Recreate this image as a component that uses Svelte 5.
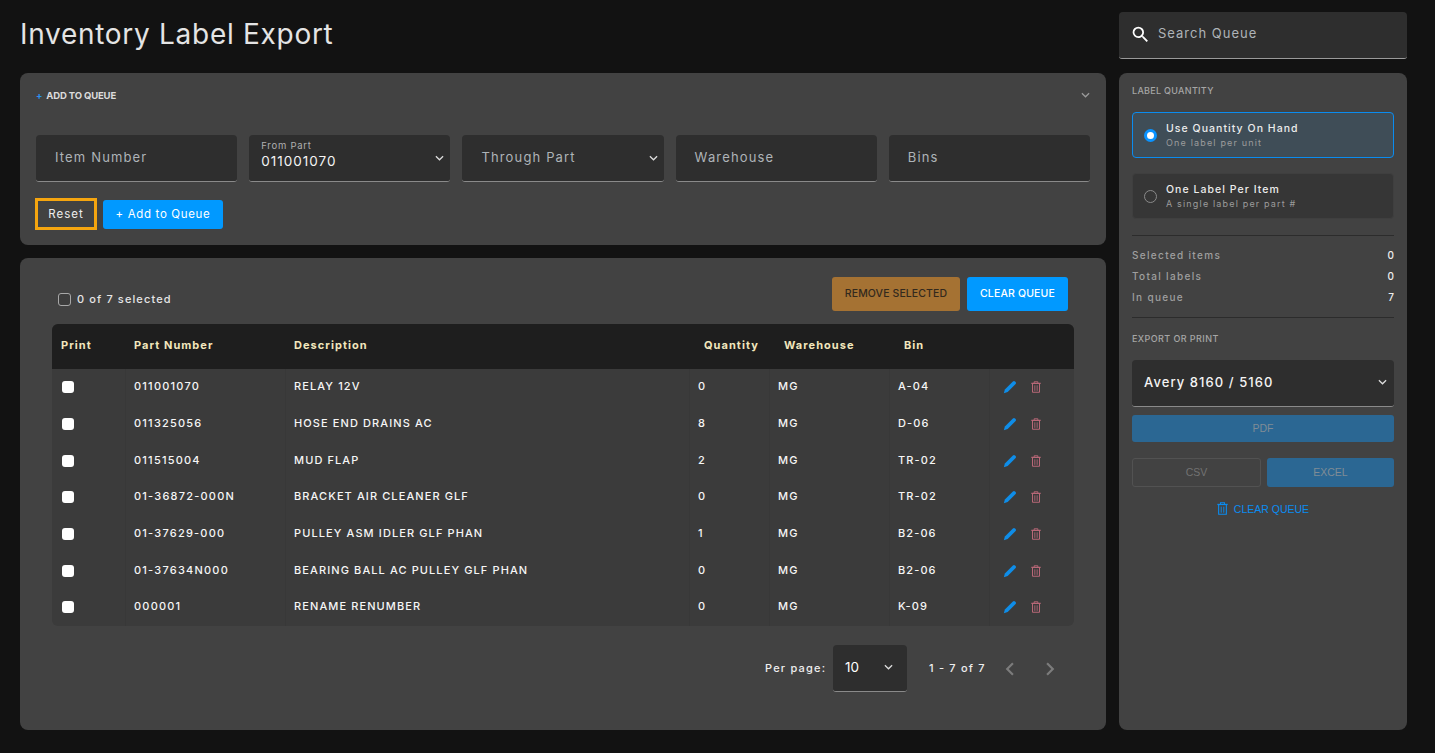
<script>
  const rows = [
    ['011001070','RELAY 12V','0','MG','A-04'],
    ['011325056','HOSE END DRAINS AC','8','MG','D-06'],
    ['011515004','MUD FLAP','2','MG','TR-02'],
    ['01-36872-000N','BRACKET AIR CLEANER GLF','0','MG','TR-02'],
    ['01-37629-000','PULLEY ASM IDLER GLF PHAN','1','MG','B2-06'],
    ['01-37634N000','BEARING BALL AC PULLEY GLF PHAN','0','MG','B2-06'],
    ['000001','RENAME RENUMBER','0','MG','K-09']
  ];
  const magnify = 'M9.5,3A6.5,6.5 0 0,1 16,9.5C16,11.11 15.41,12.59 14.44,13.73L14.71,14H15.5L20.5,19L19,20.5L14,15.5V14.71L13.73,14.44C12.59,15.41 11.11,16 9.5,16A6.5,6.5 0 0,1 3,9.5A6.5,6.5 0 0,1 9.5,3M9.5,5C7,5 5,7 5,9.5C5,12 7,14 9.5,14C12,14 14,12 14,9.5C14,7 12,5 9.5,5Z';
</script>

{#snippet chev(cls)}
  <svg class="chev {cls}" viewBox="0 0 10 6"><path d="M1 1l4 4 4-4" fill="none" stroke="currentColor" stroke-width="1.4"/></svg>
{/snippet}

{#snippet bin(cls)}
  <svg class={cls} viewBox="0 0 12 14" fill="none" stroke="currentColor">
    <path d="M0.4 2.6H11.6" stroke-width="1.4"/>
    <path d="M3.8 2.6V0.7H8.2V2.6" stroke-width="1.1"/>
    <path d="M1.8 3V13.3H10.2V3" stroke-width="1.2"/>
    <path d="M4.6 5V11.6M7.4 5V11.6" stroke-width="1"/>
  </svg>
{/snippet}

<div class="page">
  <main class="left">
    <h1>Inventory Label Export</h1>

    <section class="card filters">
      <div class="panel-head">
        <span class="panel-title"><b>+</b>ADD TO QUEUE</span>
        {@render chev('head-chev')}
      </div>
      <div class="fields">
        <div class="field"><span class="ph">Item Number</span></div>
        <div class="field filled">
          <span class="mini">From Part</span>
          <span class="val">011001070</span>
          {@render chev('field-chev')}
        </div>
        <div class="field"><span class="ph">Through Part</span>{@render chev('field-chev')}</div>
        <div class="field"><span class="ph">Warehouse</span></div>
        <div class="field"><span class="ph">Bins</span></div>
      </div>
      <div class="actions">
        <button class="reset">Reset</button>
        <button class="add">+ Add to Queue</button>
      </div>
    </section>

    <section class="card queue">
      <div class="toolbar">
        <label class="sel"><span class="box"></span>0 of 7 selected</label>
        <div class="tool-btns">
          <button class="remove">REMOVE SELECTED</button>
          <button class="clear">CLEAR QUEUE</button>
        </div>
      </div>
      <table>
        <colgroup>
          <col style="width:73px"/><col style="width:160px"/><col style="width:404px"/><col style="width:80px"/><col style="width:120px"/><col style="width:100px"/><col/>
        </colgroup>
        <thead>
          <tr>
            <th>Print</th><th>Part Number</th><th>Description</th>
            <th class="in">Quantity</th><th class="in">Warehouse</th><th class="in">Bin</th><th></th>
          </tr>
        </thead>
        <tbody>
          {#each rows as r}
            <tr>
              <td><span class="check"></span></td>
              <td class="part">{r[0]}</td>
              {#each r.slice(1) as c}<td>{c}</td>{/each}
              <td class="ops">
                <div class="op-row">
                  <svg class="pen" viewBox="0 0 14 14"><path d="M0.8 13.2L1.9 9.4L9.9 1.4Q11 .5 12 1.4L12.6 2Q13.5 3 12.6 4.1L4.6 12.1Z" fill="#0f8de8"/></svg>
                  {@render bin('row-bin')}
                </div>
              </td>
            </tr>
          {/each}
        </tbody>
      </table>
      <div class="pager">
        <span class="pp">Per page:</span>
        <div class="pp-select"><span>10</span>{@render chev('pp-chev')}</div>
        <span class="range">1 - 7 of 7</span>
        <svg class="nav" viewBox="0 0 24 24"><path d="M15.41,16.58L10.83,12L15.41,7.41L14,6L8,12L14,18L15.41,16.58Z" fill="#7c7c7c"/></svg>
        <svg class="nav" viewBox="0 0 24 24"><path d="M8.59,16.58L13.17,12L8.59,7.41L10,6L16,12L10,18L8.59,16.58Z" fill="#7c7c7c"/></svg>
      </div>
    </section>
  </main>

  <aside class="right">
    <div class="search">
      <svg viewBox="0 0 24 24"><path d={magnify} fill="#fff"/></svg>
      <span>Search Queue</span>
    </div>
    <section class="card side">
      <div class="cap">LABEL QUANTITY</div>
      <div class="opt on">
        <span class="radio"></span>
        <div><div class="opt-t">Use Quantity On Hand</div><div class="opt-s">One label per unit</div></div>
      </div>
      <div class="opt">
        <span class="radio"></span>
        <div><div class="opt-t">One Label Per Item</div><div class="opt-s">A single label per part #</div></div>
      </div>
      <div class="stats">
        <div><span>Selected items</span><b>0</b></div>
        <div><span>Total labels</span><b>0</b></div>
        <div><span>In queue</span><b>7</b></div>
      </div>
      <div class="cap cap2">EXPORT OR PRINT</div>
      <div class="format"><span>Avery 8160 / 5160</span>{@render chev('fmt-chev')}</div>
      <button class="dis pdf">PDF</button>
      <div class="two">
        <button class="dis csv">CSV</button>
        <button class="dis excel">EXCEL</button>
      </div>
      <div class="clear-link">
        {@render bin('link-bin')}
        <span>CLEAR QUEUE</span>
      </div>
    </section>
  </aside>
</div>

<style>
  :global(body) { margin: 0; background: #121212; }
  .page {
    display: flex; gap: 13px; height: 753px; box-sizing: border-box;
    padding: 12px 28px 23px 20px; background: #121212; color: #fff; overflow: hidden;
    font-family: Inter, Roboto, "Liberation Sans", sans-serif;
  }
  .left { width: 1086px; display: flex; flex-direction: column; }
  .right { width: 288px; display: flex; flex-direction: column; gap: 14px; }
  h1 { margin: 0; height: 61px; box-sizing: border-box; padding-top: 4px; font-size: 28px; line-height: 36px; font-weight: 400; letter-spacing: 0.71px; color: #e4e4e4; }
  .card { background: #424242; border-radius: 8px; box-sizing: border-box; }
  button { font-family: inherit; border: 0; cursor: pointer; }

  .filters { height: 172px; padding: 0 16px; margin-bottom: 13px; }
  .panel-head { height: 62px; display: flex; align-items: flex-start; justify-content: space-between; padding-top: 17px; box-sizing: border-box; }
  .panel-title { font-size: 9.5px; font-weight: 700; letter-spacing: -0.15px; line-height: 12px; color: #dcdcdc; }
  .panel-title b { color: #2a92f0; font-weight: 700; margin-right: 4px; }
  .chev { display: block; width: 9px; height: 6px; color: #ddd; }
  .head-chev { margin: 2px 0 0; color: #9a9a9a; }
  .fields { display: grid; grid-template-columns: repeat(5, 1fr); gap: 12px; }
  .field {
    position: relative; height: 47px; box-sizing: border-box; background: #2e2e2e;
    border-radius: 4px 4px 3px 3px; border-bottom: 1px solid #8a8a8a; padding: 11px 19px;
  }
  .ph { font-size: 13px; letter-spacing: 1.15px; line-height: 18px; color: #aeb4b8; }
  .field.filled { padding: 5px 12px; }
  .mini { display: block; font-size: 9.5px; letter-spacing: 0.75px; line-height: 12px; color: #b0b0b0; }
  .val { display: block; font-size: 13.5px; letter-spacing: 1px; line-height: 19px; color: #f4f4f4; }
  .field-chev { position: absolute; right: 6px; top: 20px; }
  .actions { display: flex; gap: 6px; margin: 16px 0 0 -1px; align-items: center; }
  .reset { width: 62px; height: 32px; box-sizing: border-box; border: 3px solid #f5a50f; background: transparent; color: #eee; font-size: 11.5px; letter-spacing: 1px; padding: 0; }
  .add { width: 120px; height: 29px; border-radius: 3px; background: #0199ff; color: #fff; font-size: 11.5px; letter-spacing: 0.65px; padding: 0; }

  .queue { flex: 1; padding: 19px 32px; }
  .toolbar { display: flex; justify-content: space-between; align-items: flex-start; height: 47px; padding: 0 6px 10px 6px; box-sizing: border-box; }
  .sel { display: flex; align-items: center; gap: 6px; margin-top: 15px; font-size: 11px; letter-spacing: 1.12px; color: #e6e6e6; font-weight: 500; }
  .box { width: 11px; height: 11px; border: 1px solid #a8a8a8; border-radius: 3px; background: #3d3d3d; }
  .tool-btns { display: flex; gap: 7px; }
  .remove { width: 128px; height: 34px; border-radius: 3px; background: #a57233; color: #33291d; font-size: 10.5px; font-weight: 500; letter-spacing: 0.1px; padding: 0 0 2px; }
  .clear { width: 101px; height: 34px; border-radius: 3px; background: #0199ff; color: #fff; font-size: 10.5px; font-weight: 500; letter-spacing: 0.15px; padding: 0 0 2px; }

  table { width: 1022px; border-collapse: separate; border-spacing: 0; table-layout: fixed; background: #3b3b3b; border-radius: 6px; overflow: hidden; }
  th { height: 45px; padding: 0 9px 4px; background: #1e1e1e; text-align: left; font-size: 11px; font-weight: 700; letter-spacing: 1.05px; color: #f2e7bd; box-sizing: border-box; }
  th.in { padding-left: 15px; }
  td { height: 36.7px; padding: 0 9px 2px 8px; box-sizing: border-box; font-size: 11px; font-weight: 500; letter-spacing: 1.1px; color: #f6f6f6; border-left: 1px solid #383838; white-space: nowrap; }
  td:first-child { border-left: 0; padding-left: 9px; }
  td.part { letter-spacing: 1.22px; }
  .check { display: block; width: 12px; height: 12px; background: #fff; border-radius: 3px; margin: 2px 0 0 1px; }
  td.ops { padding-left: 13px; }
  .op-row { display: flex; align-items: center; gap: 14px; margin-top: 2px; }
  .pen { display: block; width: 14px; height: 14px; }
  .row-bin { display: block; width: 10px; height: 12px; color: #b96878; }

  .pager { display: flex; align-items: center; margin-top: 19px; padding-left: 713px; height: 47px; }
  .pp { font-size: 11px; letter-spacing: 1.2px; color: #eee; font-weight: 500; width: 68px; white-space: nowrap; }
  .pp-select { width: 74px; height: 47px; box-sizing: border-box; background: #2e2e2e; border-radius: 4px 4px 3px 3px; border-bottom: 1px solid #8a8a8a; display: flex; align-items: center; justify-content: space-between; padding: 0 14px 2px 12px; font-size: 13.5px; letter-spacing: 0px; }
  .range { font-size: 11px; letter-spacing: 1.2px; font-weight: 500; color: #eee; margin-left: 22px; width: 57px; white-space: nowrap; }
  .nav { width: 26px; height: 26px; margin-left: 11px; margin-top: 2px; }
  .nav + .nav { margin-left: 14px; }

  .search { height: 47px; box-sizing: border-box; background: #2e2e2e; border-radius: 4px 4px 3px 3px; border-bottom: 1px solid #9a9a9a; display: flex; align-items: center; padding: 0 13px 5px 11px; gap: 7px; font-size: 13px; letter-spacing: 1px; color: #aeb4b8; }
  .search svg { width: 21px; height: 21px; margin-top: 3px; }
  .side { flex: 1; padding: 12px 13px; }
  .cap { font-size: 9px; letter-spacing: 0.3px; font-weight: 500; line-height: 12px; color: #a6a6a6; }
  .opt { margin-top: 15px; height: 46px; box-sizing: border-box; border-radius: 4px; background: #363636; border: 1px solid #3f3f3f; display: flex; align-items: center; padding: 1px 11px 0; gap: 9px; }
  .opt.on { background: #3f4d57; border-color: #0a8cf0; }
  .radio { flex: none; width: 11px; height: 11px; border: 1px solid #8a8a8a; border-radius: 50%; }
  .on .radio { width: 7px; height: 7px; background: #fff; border: 3px solid #0a93ff; }
  .opt-t { font-size: 10.5px; font-weight: 500; letter-spacing: 1.05px; line-height: 14px; color: #ececec; }
  .opt-s { font-size: 9px; letter-spacing: 1.17px; line-height: 14px; color: #9c9c9c; }
  .stats { margin-top: 16px; padding: 9px 0; border-top: 1px solid #2c2c2c; border-bottom: 1px solid #2c2c2c; }
  .stats div { display: flex; justify-content: space-between; align-items: center; height: 21px; padding-bottom: 2px; box-sizing: border-box; font-size: 10px; letter-spacing: 1.33px; color: #9f9f9f; font-weight: 500; }
  .stats b { color: #eee; font-weight: 500; letter-spacing: 0; }
  .cap2 { margin-top: 15px; letter-spacing: 0.42px; }
  .format { margin-top: 15px; height: 47px; box-sizing: border-box; background: #2e2e2e; border-radius: 4px 4px 3px 3px; border-bottom: 1px solid #8a8a8a; display: flex; align-items: center; justify-content: space-between; padding: 0 7px 2px 12px; font-size: 13px; font-weight: 500; letter-spacing: 1.07px; color: #f4f4f4; }
  .dis { display: block; font-family: "Liberation Sans", sans-serif; font-size: 10.5px; color: #7f8c96; border-radius: 3px; padding: 0 0 2px; }
  .pdf { width: 100%; height: 27px; margin-top: 8px; background: #2b6793; }
  .two { display: flex; gap: 6px; margin-top: 16px; }
  .csv { width: 129px; height: 29px; box-sizing: border-box; background: transparent; border: 1px solid #525252; color: #727272; }
  .excel { width: 127px; height: 29px; background: #2b6793; }
  .clear-link { display: flex; align-items: center; justify-content: center; gap: 6px; margin: 15px 0 0; font-family: "Liberation Sans", sans-serif; font-size: 10.5px; color: #0a8cf0; }
  .link-bin { display: block; width: 11px; height: 13px; }
</style>
